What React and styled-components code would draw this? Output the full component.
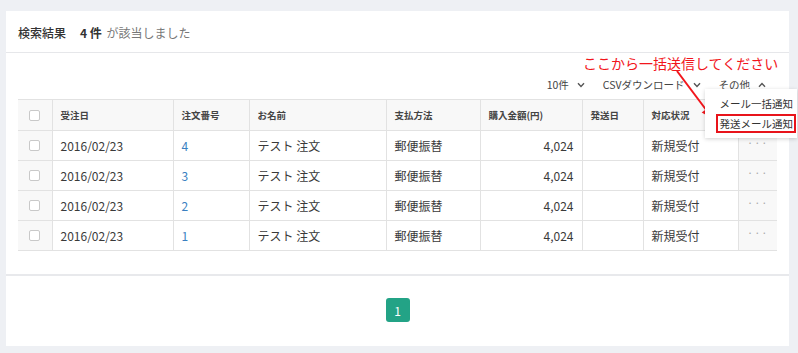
import React from "react";
import styled, { createGlobalStyle } from "styled-components";

const Global = createGlobalStyle`
  html, body { margin: 0; padding: 0; background: #eef0f4; }
  body { font-family: "Noto Sans CJK JP", "Noto Sans", sans-serif; color: #333; }
`;

const Page = styled.div`
  width: 798px;
  height: 353px;
  padding: 11px 9px 7px 6px;
  box-sizing: border-box;
`;

const Card = styled.div`
  position: relative;
  background: #fff;
  height: 335px;
  display: flex;
  flex-direction: column;
`;

const Header = styled.div`
  height: 42px;
  box-sizing: border-box;
  border-bottom: 1px solid #e6e7ea;
  display: flex;
  align-items: center;
  padding: 2px 0 0 12px;
  font-size: 12px;
  gap: 14px;
`;

const Title = styled.span`
  color: #333;
  font-weight: 500;
`;

const Count = styled.span`
  color: #777;
  strong { color: #333; font-weight: 700; margin-right: 2px; }
`;

const Body = styled.div`
  padding: 0 12px;
  height: 221px;
  border-bottom: 2px solid #e8e9ec;
  display: flex;
  flex-direction: column;
`;

const Toolbar = styled.div`
  height: 46px;
  display: flex;
  justify-content: flex-end;
  align-items: flex-end;
  padding-bottom: 7px;
  box-sizing: border-box;
  gap: 18px;
  padding-right: 11px;
  font-size: 10.5px;
  color: #444;
`;

const ToolItem = styled.span`
  display: inline-flex;
  align-items: center;
  gap: 8px;
`;

const Chevron = ({ up }) => (
  <svg width="8" height="6" viewBox="0 0 8 6">
    <path d={up ? "M1 4.8 L4 1.6 L7 4.8" : "M1 1.2 L4 4.4 L7 1.2"} fill="none" stroke="#555" strokeWidth="1.4" />
  </svg>
);

const Table = styled.table`
  border-collapse: collapse;
  table-layout: fixed;
  width: 759px;
  font-size: 12px;
  border-top: 1px solid #e2e2e2;
  border-bottom: 1px solid #e2e2e2;
`;

const Th = styled.th`
  height: 30px;
  background: #f8f8f8;
  font-size: 9.5px;
  font-weight: 700;
  color: #444;
  text-align: left;
  padding: 0 8px;
  border-left: 1px solid #e2e2e2;
  &:first-child { border-left: none; }
  border-bottom: 1px solid #e2e2e2;
`;

const Td = styled.td`
  height: 29px;
  padding: 0 8px;
  border-left: 1px solid #e2e2e2;
  border-bottom: 1px solid #e2e2e2;
  background: ${(p) => (p.$shade ? "#f8f8f8" : "#fff")};
  text-align: ${(p) => p.$align || "left"};
  color: ${(p) => p.$color || "#3a3a3a"};
  font-size: 12px;
  &:first-child { border-left: none; }
  &:last-child { border-left: 1px solid #e2e2e2; }
`;

const Check = styled.span`
  display: block;
  margin: 0 auto;
  width: 9px;
  height: 9px;
  border: 1px solid #c9c9c9;
  border-radius: 2px;
  background: #fff;
`;

const Dots = styled.span`
  color: #aaa;
  letter-spacing: 1px;
  font-size: 11px;
  position: relative;
  top: -4px;
`;

const Footer = styled.div`
  flex: 1;
  display: flex;
  justify-content: center;
  align-items: center;
  padding-bottom: 2px;
`;

const PageBtn = styled.span`
  width: 24px;
  height: 24px;
  border-radius: 3px;
  background: #23a386;
  color: #fff;
  font-size: 12px;
  display: flex;
  align-items: center;
  justify-content: center;
`;

const Menu = styled.div`
  position: absolute;
  left: 699px;
  top: 78px;
  width: 92px;
  height: 49px;
  box-sizing: border-box;
  background: #fff;
  box-shadow: 0 1px 4px rgba(0, 0, 0, 0.18);
  padding: 5px 0 0;
  font-size: 10.5px;
  color: #333;
  display: flex;
  flex-direction: column;
  gap: 1px;
  align-items: flex-end;
`;

const MenuItem = styled.div`
  padding: 1px 1px 1px 2px;
  margin-right: 1px;
  border: 2px solid ${(p) => (p.$hl ? "#e8141b" : "transparent")};
  line-height: 13px;
`;

const Annotation = styled.div`
  position: absolute;
  left: 577px;
  top: 42px;
  color: #f2161c;
  font-size: 14px;
  white-space: nowrap;
`;

const Arrow = styled.svg`
  position: absolute;
  left: 664px;
  top: 57px;
`;

const rows = [4, 3, 2, 1];

export default function App() {
  return (
    <>
      <Global />
      <Page>
        <Card>
          <Header>
            <Title>検索結果</Title>
            <Count>
              <strong>4 件</strong> が該当しました
            </Count>
          </Header>
          <Body>
            <Toolbar>
              <ToolItem>
                10件 <Chevron />
              </ToolItem>
              <ToolItem>
                CSVダウンロード <Chevron />
              </ToolItem>
              <ToolItem>
                その他 <Chevron up />
              </ToolItem>
            </Toolbar>
            <Table>
              <colgroup>
                <col style={{ width: 34 }} />
                <col style={{ width: 121 }} />
                <col style={{ width: 76 }} />
                <col style={{ width: 137 }} />
                <col style={{ width: 94 }} />
                <col style={{ width: 102 }} />
                <col style={{ width: 61 }} />
                <col style={{ width: 95 }} />
                <col style={{ width: 39 }} />
              </colgroup>
              <thead>
                <tr>
                  <Th>
                    <Check />
                  </Th>
                  <Th>受注日</Th>
                  <Th>注文番号</Th>
                  <Th>お名前</Th>
                  <Th>支払方法</Th>
                  <Th>購入金額(円)</Th>
                  <Th>発送日</Th>
                  <Th>対応状況</Th>
                  <Th />
                </tr>
              </thead>
              <tbody>
                {rows.map((n) => (
                  <tr key={n}>
                    <Td $shade>
                      <Check />
                    </Td>
                    <Td>2016/02/23</Td>
                    <Td $color="#3a7fc1">{n}</Td>
                    <Td>テスト 注文</Td>
                    <Td>郵便振替</Td>
                    <Td $align="right">4,024</Td>
                    <Td />
                    <Td>新規受付</Td>
                    <Td $shade $align="center">
                      <Dots>···</Dots>
                    </Td>
                  </tr>
                ))}
              </tbody>
            </Table>
          </Body>
          <Footer>
            <PageBtn>1</PageBtn>
          </Footer>
          <Annotation>ここから一括送信してください</Annotation>
          <Arrow width="56" height="56" viewBox="0 0 56 56">
            <line x1="7" y1="3" x2="37" y2="43" stroke="#f2161c" strokeWidth="2" />
            <polygon points="43,51 31.7,44.4 39.7,38.4" fill="#f2161c" />
          </Arrow>
          <Menu>
            <MenuItem>メール一括通知</MenuItem>
            <MenuItem $hl>発送メール通知</MenuItem>
          </Menu>
        </Card>
      </Page>
    </>
  );
}
